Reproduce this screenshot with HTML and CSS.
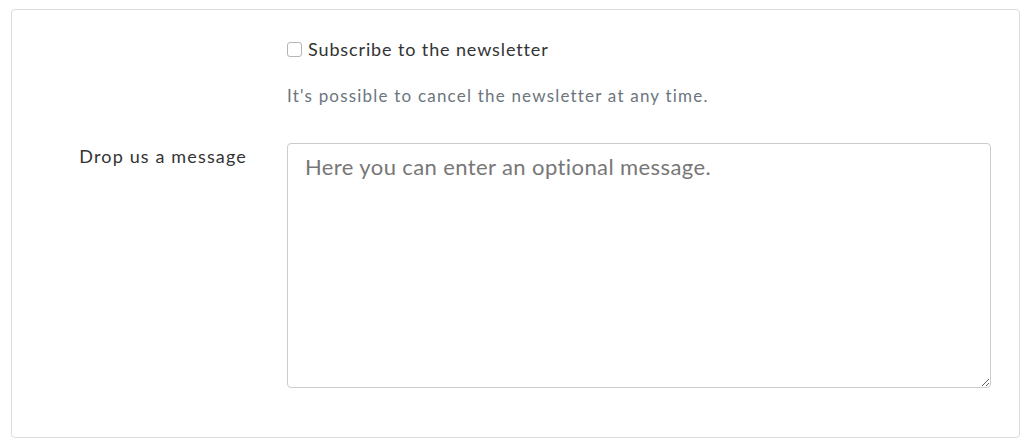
FILE: index.html
```html
<!doctype html>
<html lang="en">
    <head>
        <meta charset="UTF-8" />
        <meta name="viewport" content="width=device-width, initial-scale=1.0" />
        <title>Newsletter form</title>
        <link rel="stylesheet" href="styles.css">
    </head>
    <body>
        <form class="card">
            <div class="row">
                <div></div>
                <div class="field">
                    <label class="check">
                        <input type="checkbox" />
                        <span>Subscribe to the newsletter</span>
                    </label>
                    <p class="help">It's possible to cancel the newsletter at any time.</p>
                </div>
            </div>
            <div class="row">
                <label class="label" for="message">Drop us a message</label>
                <div class="field">
                    <textarea id="message" placeholder="Here you can enter an optional message."></textarea>
                </div>
            </div>
        </form>
    </body>
</html>
```

FILE: styles.css
```css
body {
    font-family: "Lato", sans-serif;
    background-color: #fff;
    margin: 0;
    padding: 9px 10px 5px 11px;
    color: #333;
}

.card {
    border: 1px solid #dcdcdc;
    border-radius: 4px;
    padding: 27px 27px 49px 28px;
}

.row {
    display: grid;
    grid-template-columns: 207px 704px;
    column-gap: 40px;
}

.check {
    display: flex;
    align-items: center;
    gap: 6px;
    font-size: 18px;
    line-height: 24px;
    letter-spacing: 0.88px;
    color: #333;
}

.check input {
    appearance: none;
    margin: 0;
    width: 15px;
    height: 15px;
    border: 1px solid #b5b5b5;
    border-radius: 3px;
    background: #fff;
}

.help {
    margin: 23px 0 35px;
    font-size: 17px;
    line-height: 24px;
    letter-spacing: 1.2px;
    color: #6c757d;
}

.label {
    text-align: right;
    font-size: 18px;
    line-height: 24px;
    letter-spacing: 1.15px;
    padding-top: 1px;
}

textarea {
    display: block;
    box-sizing: border-box;
    width: 704px;
    height: 245px;
    margin: 0;
    padding: 8px 17px;
    border: 1px solid #ccc;
    border-radius: 4px;
    font-family: inherit;
    font-size: 22px;
    line-height: 30px;
    letter-spacing: 0.4px;
    color: #333;
}

textarea::placeholder {
    color: #777;
}
```
